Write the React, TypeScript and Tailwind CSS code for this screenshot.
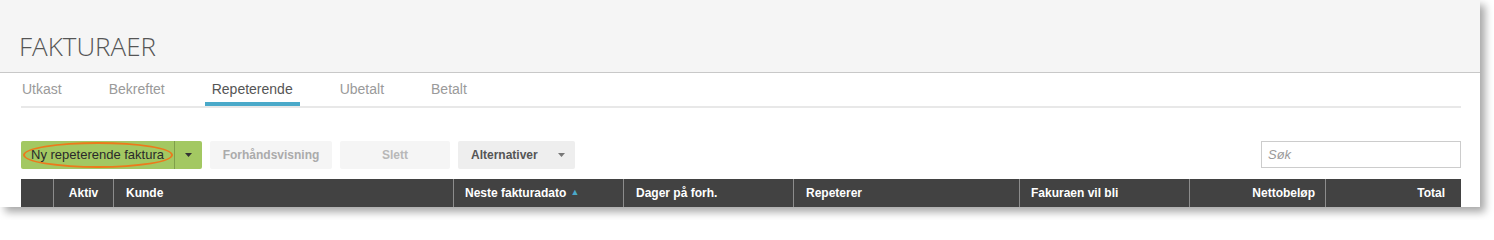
import React from "react";

const cols: { label: string; w: number; align: "left" | "center" | "right"; pad: string; sort?: boolean }[] = [
  { label: "", w: 32, align: "left", pad: "" },
  { label: "Aktiv", w: 60, align: "center", pad: "" },
  { label: "Kunde", w: 340, align: "left", pad: "pl-[12px]" },
  { label: "Neste fakturadato", w: 170, align: "left", pad: "pl-[11px]", sort: true },
  { label: "Dager på forh.", w: 170, align: "left", pad: "pl-[12px]" },
  { label: "Repeterer", w: 226, align: "left", pad: "pl-[12px]" },
  { label: "Fakuraen vil bli", w: 170, align: "left", pad: "pl-[11px]" },
  { label: "Nettobeløp", w: 136, align: "right", pad: "pr-[10px]" },
  { label: "Total", w: 136, align: "right", pad: "pr-[16px]" },
];

const tabs = ["Utkast", "Bekreftet", "Repeterende", "Ubetalt", "Betalt"];

function Caret({ color }: { color: string }) {
  return (
    <svg width="7" height="4" viewBox="0 0 7 4" className="block">
      <path d="M0 0 L7 0 L3.5 4 Z" fill={color} />
    </svg>
  );
}

export default function App() {
  const arial = { fontFamily: '"Liberation Sans", Arial, sans-serif' };
  return (
    <div className="w-[1494px] h-[220px] bg-white" style={arial}>
      <div className="w-[1480px] h-[207px] overflow-hidden bg-white shadow-[5px_5px_8px_rgba(0,0,0,0.35)]">
        {/* header */}
        <div className="h-[73px] bg-[#f5f5f5] border-b border-[#c8c8c8] pl-[19px] pt-[28px]">
          <h1
            className="text-[26px] leading-[36px] font-light text-[#555555]"
            style={{ fontFamily: '"Open Sans", "Liberation Sans", sans-serif' }}
          >
            FAKTURAER
          </h1>
        </div>

        {/* tabs */}
        <div className="pl-[21px] pr-[19px]">
          <div className="flex gap-[33px] -ml-[6px]">
            {tabs.map((t) => (
              <div
                key={t}
                className={
                  "px-[7px] pt-[8px] pb-[5px] text-[14px] leading-[16px] border-b-4 " +
                  (t === "Repeterende"
                    ? "border-[#4aa9c9] text-[#555555]"
                    : "border-transparent text-[#9a9a9a]")
                }
              >
                {t}
              </div>
            ))}
          </div>
          <div className="h-[2px] bg-[#e8e8e8]" />
        </div>

        {/* toolbar */}
        <div className="mt-[33px] pl-[21px] pr-[19px] flex items-start justify-between">
          <div className="flex h-[28px]">
            <div className="relative flex rounded-[2px] bg-[#a3c862]">
              <div className="w-[153px] h-[28px] flex items-center justify-center text-[13px] text-[#2a2a2a]">
                Ny repeterende faktura
              </div>
              <div className="w-[1px] bg-[#7f9f4a]" />
              <div className="w-[27px] h-[28px] flex items-center justify-center">
                <Caret color="#333333" />
              </div>
              <div className="absolute left-[2px] top-[1px] w-[150px] h-[26px] rounded-[50%] border-2 border-[#ec7a1c]" />
            </div>
            <div className="ml-[8px] w-[122px] h-[28px] rounded-[2px] bg-[#f5f5f5] flex items-center justify-center text-[12px] font-bold text-[#ababab]">
              Forhåndsvisning
            </div>
            <div className="ml-[8px] w-[110px] h-[28px] rounded-[2px] bg-[#f5f5f5] flex items-center justify-center text-[12px] font-bold text-[#b8b8b8]">
              Slett
            </div>
            <div className="ml-[8px] w-[117px] h-[28px] rounded-[2px] bg-[#eeeeee] flex items-center pl-[13px] text-[12px] font-bold text-[#555555]">
              <span>Alternativer</span>
              <span className="ml-[20px]">
                <Caret color="#777777" />
              </span>
            </div>
          </div>
          <div className="w-[200px] h-[27px] border border-[#cccccc] bg-white flex items-center pl-[6px] text-[13px] italic text-[#9a9a9a]">
            Søk
          </div>
        </div>

        {/* table header */}
        <div className="mt-[10px] ml-[21px] mr-[19px] flex h-[30px] bg-[#424242] text-white text-[12px] font-bold">
          {cols.map((c, i) => (
            <div
              key={i}
              className={
                "h-full flex items-center pb-[2px] " +
                (i > 0 ? "border-l border-[#8c8c8c] " : "") +
                (c.align === "center" ? "justify-center " : c.align === "right" ? "justify-end " : "justify-start ") +
                c.pad
              }
              style={{ width: c.w }}
            >
              {c.label}
              {c.sort && <span className="ml-[4px] text-[9px] text-[#4aa9c9]">▲</span>}
            </div>
          ))}
        </div>
      </div>
    </div>
  );
}
